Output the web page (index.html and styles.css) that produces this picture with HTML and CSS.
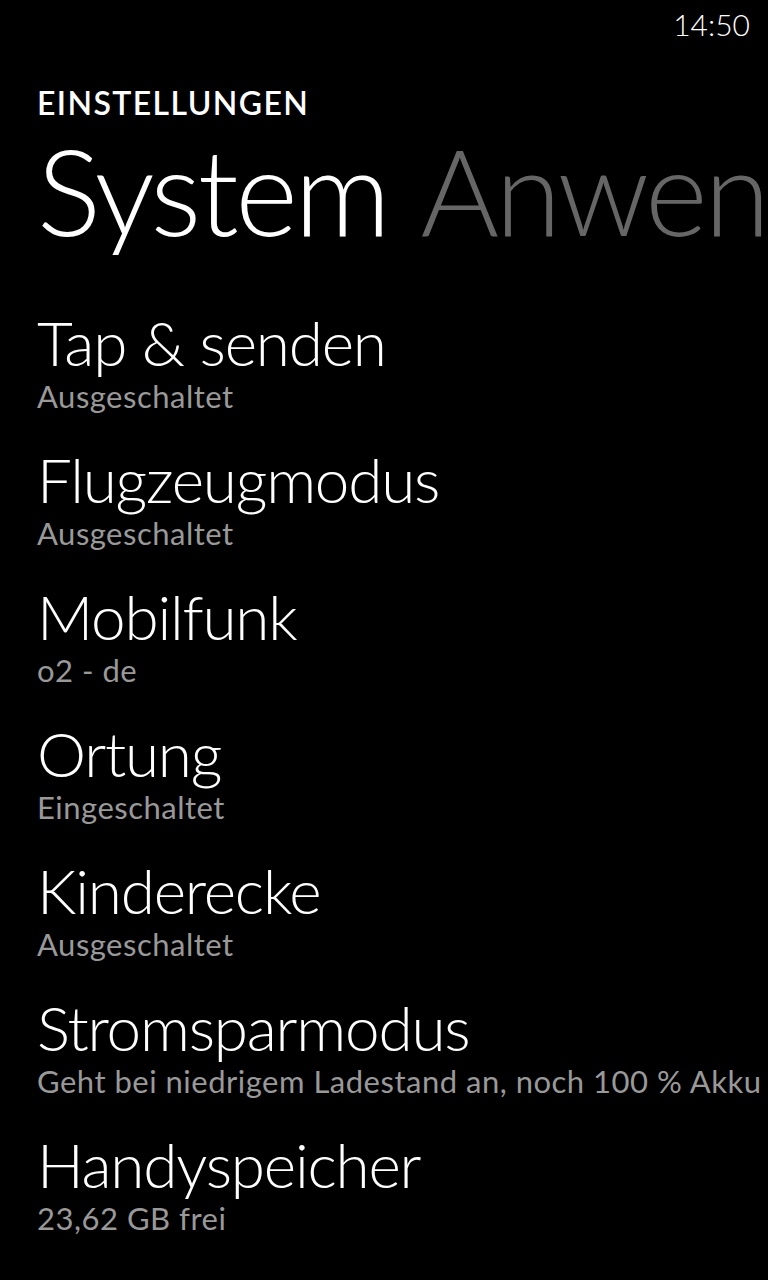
FILE: index.html
```html
<!DOCTYPE html>
<html lang="de">
<head>
    <meta charset="UTF-8">
    <meta name="viewport" content="width=device-width, initial-scale=1.0">
    <title>Einstellungen</title>
    <link rel="stylesheet" href="styles.css">
</head>
<body>
    <div class="status">
        <span class="time">14:50</span>
    </div>
    <div class="header">
        <div class="app-title">EINSTELLUNGEN</div>
        <div class="pivot">
            <span class="pivot-item active">System</span>
            <span class="pivot-item">Anwendungen</span>
        </div>
    </div>
    <ul class="list">
        <li class="item">
            <div class="item-title">Tap &amp; senden</div>
            <div class="item-sub">Ausgeschaltet</div>
        </li>
        <li class="item">
            <div class="item-title">Flugzeugmodus</div>
            <div class="item-sub">Ausgeschaltet</div>
        </li>
        <li class="item">
            <div class="item-title">Mobilfunk</div>
            <div class="item-sub">o2 - de</div>
        </li>
        <li class="item">
            <div class="item-title">Ortung</div>
            <div class="item-sub">Eingeschaltet</div>
        </li>
        <li class="item">
            <div class="item-title">Kinderecke</div>
            <div class="item-sub">Ausgeschaltet</div>
        </li>
        <li class="item">
            <div class="item-title">Stromsparmodus</div>
            <div class="item-sub">Geht bei niedrigem Ladestand an, noch 100 % Akku</div>
        </li>
        <li class="item">
            <div class="item-title">Handyspeicher</div>
            <div class="item-sub">23,62 GB frei</div>
        </li>
    </ul>
</body>
</html>
```

FILE: styles.css
```css
html, body {
    margin: 0;
    padding: 0;
    background: #000;
}
body {
    font-family: Lato, "Open Sans", sans-serif;
    color: #fff;
    width: 768px;
    height: 1280px;
    overflow: hidden;
}
.status {
    height: 48px;
    display: flex;
    justify-content: flex-end;
    padding-right: 18px;
}
.time {
    font-size: 30px;
    line-height: 48px;
    font-weight: 300;
}
.header {
    padding: 35px 0 0 37px;
}
.app-title {
    font-size: 32px;
    line-height: 40px;
    font-weight: 600;
    letter-spacing: 1.4px;
}
.pivot {
    margin-top: 2px;
    white-space: nowrap;
    overflow: hidden;
    font-size: 120px;
    line-height: 130px;
    font-weight: 300;
    letter-spacing: -3.5px;
}
.pivot-item {
    color: #666;
    margin-right: 8px;
}
.pivot-item.active {
    color: #fff;
}
.list {
    list-style: none;
    margin: 53px 0 0;
    padding: 0 0 0 37px;
}
.item {
    padding-bottom: 29px;
    white-space: nowrap;
}
.item-title {
    font-size: 62px;
    line-height: 68px;
    font-weight: 300;
    letter-spacing: -1.2px;
}
.item-sub {
    font-size: 31px;
    line-height: 40px;
    color: #999;
    letter-spacing: 0.5px;
}
```
